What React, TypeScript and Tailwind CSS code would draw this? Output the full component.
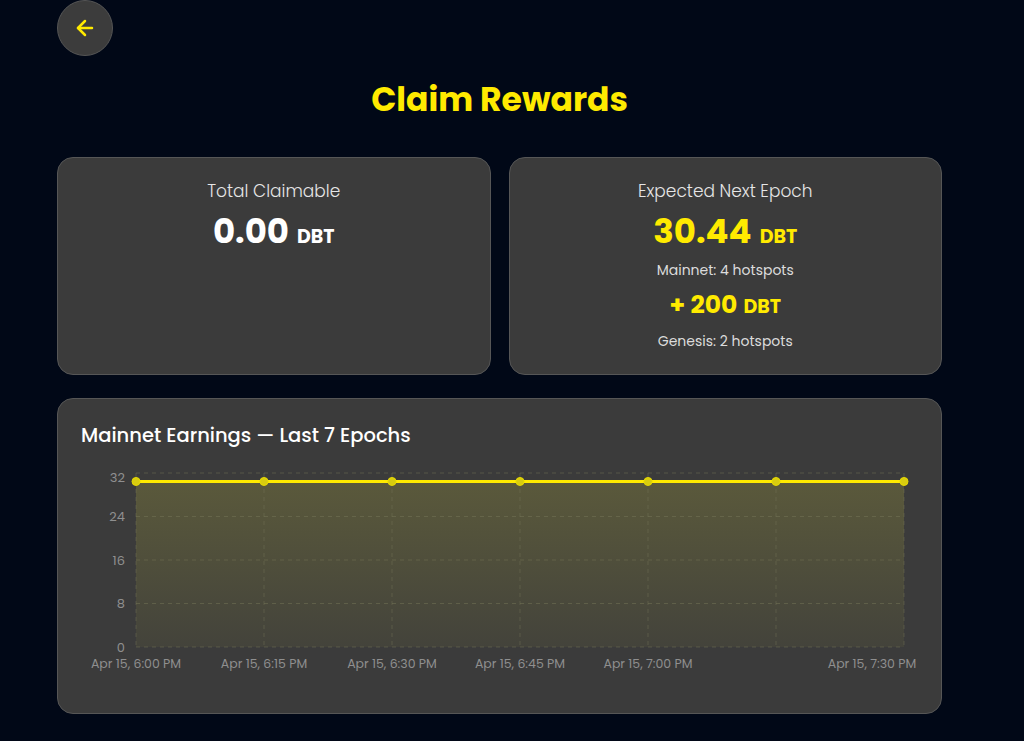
import React from "react";

const YEL = "#ffea00";

function Chart() {
  const xs = [55, 183, 311, 439, 567, 695, 823];
  const yFor = (v: number) => 187 - (v / 32) * 174;
  const ly = yFor(30.44);
  const ticks = [0, 8, 16, 24, 32];
  const labels: [number, string][] = [
    [55, "Apr 15, 6:00 PM"],
    [183, "Apr 15, 6:15 PM"],
    [311, "Apr 15, 6:30 PM"],
    [439, "Apr 15, 6:45 PM"],
    [567, "Apr 15, 7:00 PM"],
    [791, "Apr 15, 7:30 PM"],
  ];
  return (
    <svg width="836" height="216" viewBox="0 0 836 216" className="block">
      <defs>
        <linearGradient id="fillg" x1="0" y1="0" x2="0" y2="1">
          <stop offset="0%" stopColor="#b3ae3c" stopOpacity="0.26" />
          <stop offset="100%" stopColor="#b3ae3c" stopOpacity="0.07" />
        </linearGradient>
      </defs>
      <path d={`M55 ${ly} L823 ${ly} L823 187 L55 187 Z`} fill="url(#fillg)" />
      {ticks.map((t) => (
        <line key={t} x1={55} x2={823} y1={yFor(t)} y2={yFor(t)} stroke="#7a7a5c" strokeOpacity="0.45" strokeDasharray="4 4" strokeWidth="1" />
      ))}
      {xs.map((x) => (
        <line key={x} x1={x} x2={x} y1={13} y2={187} stroke="#7a7a5c" strokeOpacity="0.4" strokeDasharray="4 4" strokeWidth="1" />
      ))}
      <line x1={55} x2={823} y1={ly} y2={ly} stroke={YEL} strokeWidth="3" />
      {xs.map((x) => (
        <circle key={x} cx={x} cy={ly} r="4" fill="#d8cc10" stroke="#e6d900" strokeWidth="1" />
      ))}
      {ticks.map((t) => (
        <text key={t} x={44} y={yFor(t) + 4.5 + (t === 32 ? 4 : 0)} textAnchor="end" fontSize="13" fill="#8f8f8f" style={{ fontFamily: "Poppins, Inter, sans-serif" }}>
          {t}
        </text>
      ))}
      {labels.map(([x, s]) => (
        <text key={s} x={x} y={208} textAnchor="middle" fontSize="12.5" fill="#8f8f8f" style={{ fontFamily: "Poppins, Inter, sans-serif" }}>
          {s}
        </text>
      ))}
    </svg>
  );
}

export default function App() {
  return (
    <div
      className="min-h-screen bg-[#010817] text-white"
      style={{ fontFamily: "Poppins, Inter, 'Noto Sans', sans-serif" }}
    >
      <div className="w-[885px] ml-[57px] flex flex-col">
        <div className="flex">
          <button className="w-[56px] h-[56px] rounded-full bg-[#3c3c3c] border border-[#555555] flex items-center justify-center">
            <svg width="24" height="24" viewBox="0 0 24 24" fill="none" stroke={YEL} strokeWidth="2.5" strokeLinecap="round" strokeLinejoin="round">
              <path d="M19 12H5" />
              <path d="M12 19l-7-7 7-7" />
            </svg>
          </button>
        </div>
        <h1 className="mt-[24px] text-center text-[33px] leading-[40px] font-bold text-[#ffea00]">
          Claim Rewards
        </h1>
        <div className="mt-[37px] grid grid-cols-2 gap-[18px]">
          <div className="h-[218px] rounded-2xl bg-[#3b3b3b] border border-[#565656] flex flex-col items-center pt-[21px]">
            <div className="text-[17px] leading-6 text-[#e6e6e6] font-light">Total Claimable</div>
            <div className="mt-[8px] leading-[40px] font-bold text-white flex items-baseline gap-[8px]">
              <span className="text-[34px]">0.00</span>
              <span className="text-[19px]">DBT</span>
            </div>
          </div>
          <div className="h-[218px] rounded-2xl bg-[#3b3b3b] border border-[#565656] flex flex-col items-center pt-[21px]">
            <div className="text-[17px] leading-6 text-[#e6e6e6] font-light">Expected Next Epoch</div>
            <div className="mt-[8px] leading-[40px] font-bold text-[#ffea00] flex items-baseline gap-[8px]">
              <span className="text-[34px]">30.44</span>
              <span className="text-[19px]">DBT</span>
            </div>
            <div className="mt-[3px] text-[14px] leading-5 text-[#dcdcdc]">Mainnet: 4 hotspots</div>
            <div className="mt-[9px] leading-8 font-bold text-[#ffea00] flex items-baseline gap-[6px]">
              <span className="text-[25px]">+ 200</span>
              <span className="text-[19px]">DBT</span>
            </div>
            <div className="mt-[8px] text-[14px] leading-5 text-[#dcdcdc]">Genesis: 2 hotspots</div>
          </div>
        </div>
        <div className="mt-[23px] h-[316px] rounded-2xl bg-[#3b3b3b] border border-[#565656] px-[23px] pt-[23px]">
          <div className="text-[19.5px] leading-7 font-medium text-white">
            Mainnet Earnings — Last 7 Epochs
          </div>
          <div className="mt-[10px]">
            <Chart />
          </div>
        </div>
      </div>
    </div>
  );
}
